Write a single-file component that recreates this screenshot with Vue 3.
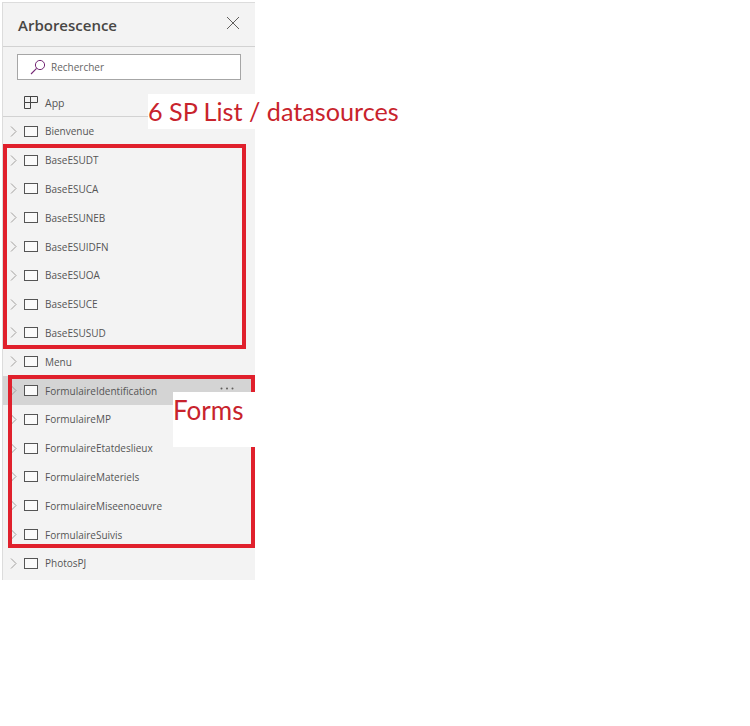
<template>
  <div class="page">
    <aside class="panel">
      <header class="panel-head">
        <h1 class="title">Arborescence</h1>
        <svg class="close" width="14" height="14" viewBox="0 0 14 14">
          <path d="M1 1l12 12M13 1L1 13" stroke="#605e5c" stroke-width="1" fill="none" />
        </svg>
      </header>
      <div class="search-wrap">
        <div class="search">
          <svg class="search-icon" width="16" height="16" viewBox="0 0 16 16">
            <circle cx="10" cy="6" r="4.6" stroke="#742774" stroke-width="1" fill="none" />
            <path d="M6.6 9.4L1 15" stroke="#742774" stroke-width="1.1" fill="none" />
          </svg>
          <span>Rechercher</span>
        </div>
      </div>
      <div class="app-row">
        <svg width="14" height="13" viewBox="0 0 14 13">
          <path d="M.5 .5h13v6h-13zM.5 6.5h6v6h-6zM6.5 .5v6" stroke="#444" fill="none" />
        </svg>
        <span>App</span>
      </div>
      <ul class="tree">
        <li v-for="name in screens" :key="name" class="row" :class="{ selected: name === selected }">
          <svg class="chevron" width="7" height="11" viewBox="0 0 7 11">
            <path d="M1 .5l5 5-5 5" stroke="#a19f9d" fill="none" />
          </svg>
          <span class="screen-icon"></span>
          <span class="name">{{ name }}</span>
          <svg v-if="name === selected" class="more" width="14" height="3" viewBox="0 0 14 3">
            <circle cx="1.5" cy="1.5" r="1" fill="#605e5c" />
            <circle cx="7" cy="1.5" r="1" fill="#605e5c" />
            <circle cx="12.5" cy="1.5" r="1" fill="#605e5c" />
          </svg>
        </li>
      </ul>
    </aside>

    <div class="mark mark-lists"></div>
    <div class="mark mark-forms"></div>
    <div class="note note-lists">6 SP List / datasources</div>
    <div class="note note-forms">Forms</div>
  </div>
</template>

<script setup>
const selected = 'FormulaireIdentification'
const screens = [
  'Bienvenue',
  'BaseESUDT',
  'BaseESUCA',
  'BaseESUNEB',
  'BaseESUIDFN',
  'BaseESUOA',
  'BaseESUCE',
  'BaseESUSUD',
  'Menu',
  'FormulaireIdentification',
  'FormulaireMP',
  'FormulaireEtatdeslieux',
  'FormulaireMateriels',
  'FormulaireMiseenoeuvre',
  'FormulaireSuivis',
  'PhotosPJ'
]
</script>

<style scoped>
.page {
  position: relative;
  width: 750px;
  height: 726px;
  background: #fff;
  overflow: hidden;
  padding-top: 2px;
  box-sizing: border-box;
  font-family: "Open Sans", "Liberation Sans", sans-serif;
}
.panel {
  width: 253px;
  height: 578px;
  margin-left: 2px;
  background: #f3f3f3;
  border-top: 1px solid #dcdcdc;
  border-left: 1px solid #dcdcdc;
  box-sizing: border-box;
  color: #555;
}
.panel-head {
  height: 44px;
  box-sizing: border-box;
  display: flex;
  align-items: center;
  justify-content: space-between;
  padding: 0 15px;
  border-bottom: 1px solid #d2d2d2;
}
.title {
  margin: 0;
  font-size: 15px;
  font-weight: 600;
  color: #484644;
}
.close { margin-bottom: 3px; }
.search-wrap { padding: 7px 14px 0 14px; }
.search {
  height: 26px;
  width: 224px;
  box-sizing: border-box;
  background: #fff;
  border: 1px solid #a6a6a6;
  display: flex;
  align-items: center;
  gap: 5px;
  padding-left: 12px;
  font-size: 10px;
  color: #666;
}
.app-row {
  height: 37px;
  box-sizing: border-box;
  display: flex;
  align-items: center;
  gap: 7px;
  padding: 9px 0 0 21px;
  border-bottom: 1px solid #d2d2d2;
  font-size: 10.5px;
}
.tree {
  list-style: none;
  margin: 0;
  padding: 0;
}
.row {
  height: 28.8px;
  display: flex;
  align-items: center;
  font-size: 10px;
  color: #555;
}
.row.selected { background: #d4d4d4; }
.chevron { margin-left: 7px; flex: none; }
.screen-icon {
  width: 14px;
  height: 11px;
  box-sizing: border-box;
  margin-left: 7px;
  border: 1px solid #555;
  background: #fafafa;
  flex: none;
}
.name { margin-left: 7px; }
.more {
  margin-left: auto;
  margin-right: 21px;
  margin-top: -5px;
}
.mark {
  position: absolute;
  box-sizing: border-box;
  border: 4.5px solid #e0202c;
}
.mark-lists { left: 3px; top: 144px; width: 243px; height: 205px; }
.mark-forms { left: 8px; top: 375px; width: 247px; height: 173px; }
.note {
  position: absolute;
  font-family: Lato, "Open Sans", sans-serif;
  color: #c8232c;
  background: #fff;
  line-height: 1;
  white-space: nowrap;
  box-sizing: border-box;
}
.note-lists { left: 148px; top: 94px; height: 35px; padding: 5px 0 0 0; font-size: 25.2px; }
.note-forms { left: 173px; top: 392px; width: 82px; height: 55px; padding: 5px 0 0 0; font-size: 26px; }
</style>
